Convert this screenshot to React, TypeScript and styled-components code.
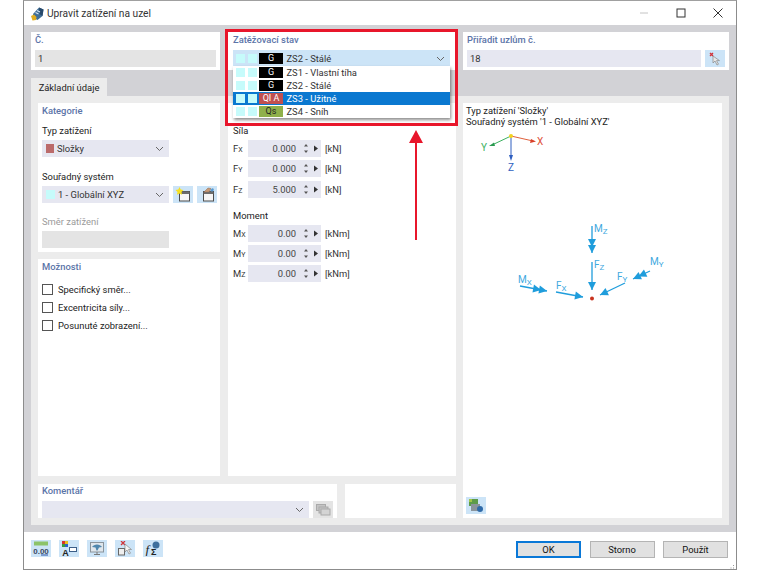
import React from 'react';
import styled, { createGlobalStyle } from 'styled-components';

const Global = createGlobalStyle`
    html, body { margin: 0; padding: 0; background: #fff; }
    body { font-family: Roboto, "Open Sans", sans-serif; font-size: 9.4px; color: #222; }
`;

const Page = styled.div`
    width: 760px;
    height: 570px;
    padding-left: 23px;
    box-sizing: border-box;
    position: relative;
    overflow: hidden;
`;

const Dialog = styled.div`
    width: 714px;
    height: 570px;
    box-sizing: border-box;
    border: 1px solid #8c8c8c;
    border-top-color: #a0a0a0;
    display: flex;
    flex-direction: column;
    background: #fff;
`;

const TitleBar = styled.div`
    height: 24px;
    display: flex;
    align-items: center;
    padding-left: 6px;
    flex: none;
`;

const TitleText = styled.span`
    font-size: 10.2px;
    margin-left: 2px;
    color: #333;
`;

const WinControls = styled.div`
    margin-left: auto;
    display: flex;
    align-items: center;
    gap: 27px;
    padding-right: 13px;
`;

const Body = styled.div`
    flex: 1;
    background: #d2d2d6;
    padding: 7px;
    display: flex;
    flex-direction: column;
`;

const TopRow = styled.div`
    display: grid;
    grid-template-columns: 189px 227px 266px;
    column-gap: 8px;
    height: 38px;
    flex: none;
`;

const Panel = styled.div`
    background: #fff;
    padding: 0 4px;
    box-sizing: border-box;
    position: relative;
    min-width: 0;
`;

const TopPanel = styled(Panel)`
    padding-top: 1px;
`;

const CasePanel = styled(TopPanel)`
    padding-left: 5px;
    padding-right: 5px;
`;

const Caption = styled.div<{ $muted?: boolean }>`
    color: ${(p) => (p.$muted ? '#9a9a9a' : '#5b74a8')};
    font-weight: ${(p) => (p.$muted ? 400 : 500)};
    line-height: 14px;
    height: 14px;
    margin-bottom: 3px;
`;

const Label = styled.div`
    line-height: 14px;
    height: 14px;
    margin-bottom: 2px;
`;

const Field = styled.div<{ $bg?: string; $w?: number }>`
    height: 17px;
    line-height: 17px;
    padding-left: 3px;
    box-sizing: border-box;
    background: ${(p) => p.$bg || '#e6e7f1'};
    ${(p) => (p.$w ? `width: ${p.$w}px;` : '')}
    flex: ${(p) => (p.$w ? 'none' : '1')};
    color: #333;
`;

const FieldRow = styled.div`
    display: flex;
    gap: 4px;
    align-items: flex-start;
`;

const IconBtn = styled.div<{ $grey?: boolean }>`
    width: 20px;
    height: 17px;
    flex: none;
    background: ${(p) => (p.$grey ? '#e4e4e4' : '#cce4f7')};
    display: flex;
    align-items: center;
    justify-content: center;
`;

const Select = styled.div<{ $bg?: string; $w?: number }>`
    height: 17px;
    ${(p) => (p.$w ? `width: ${p.$w}px;` : '')}
    flex: none;
    background: ${(p) => p.$bg || '#e6e7f1'};
    display: flex;
    align-items: center;
    padding: 0 4px;
    box-sizing: border-box;
    gap: 3px;
    color: #333;
`;

const CaseSelect = styled(Select)`
    padding: 0 4px 0 3px;
    gap: 2.5px;
`;

const Chevron = styled.svg`
    margin-left: auto;
    margin-right: 1px;
    width: 9px;
    height: 6px;
    flex: none;
`;

const Swatch = styled.span<{ $c: string; $w?: number }>`
    width: ${(p) => p.$w || 8}px;
    height: 9px;
    background: ${(p) => p.$c};
    flex: none;
    display: inline-block;
`;

const Light = styled.span`
    width: 9px;
    height: 9px;
    background: #c6fbfb;
    flex: none;
`;

const CaseTag = styled.span<{ $bg: string; $fg: string }>`
    width: 24px;
    height: 11px;
    line-height: 11px;
    text-align: center;
    font-size: 9px;
    margin: 0 1px 0 0;
    background: ${(p) => p.$bg};
    color: ${(p) => p.$fg};
    flex: none;
`;

const DropList = styled.div`
    position: absolute;
    left: 5px;
    top: 34px;
    width: 217px;
    background: #fff;
    box-shadow: 1px 2px 3px rgba(0, 0, 0, 0.45);
    z-index: 2;
`;

const DropRow = styled.div<{ $active?: boolean }>`
    height: 13px;
    display: flex;
    align-items: center;
    gap: 2.5px;
    padding: 0 3px;
    background: ${(p) => (p.$active ? '#0a78d0' : 'transparent')};
    color: ${(p) => (p.$active ? '#fff' : '#333')};
`;

const RedFrame = styled.div`
    position: absolute;
    left: 225px;
    top: 29px;
    width: 233px;
    height: 97px;
    box-sizing: border-box;
    border: 3px solid #e8162b;
    z-index: 3;
    pointer-events: none;
`;

const RedArrow = styled.svg`
    position: absolute;
    left: 402px;
    top: 128px;
    z-index: 3;
`;

const Tab = styled.div`
    width: 76px;
    height: 18px;
    line-height: 19px;
    text-align: center;
    background: #ececec;
    margin-top: 8px;
    flex: none;
`;

const TabBody = styled.div`
    flex: 1;
    background: #ececec;
    padding: 7px;
    display: flex;
    gap: 7px;
`;

const LeftArea = styled.div`
    width: 418px;
    flex: none;
    display: flex;
    flex-direction: column;
    gap: 8px;
`;

const Columns = styled.div`
    height: 373px;
    flex: none;
    display: flex;
    gap: 8px;
`;

const SideCol = styled.div`
    width: 182px;
    flex: none;
    display: flex;
    flex-direction: column;
    gap: 7px;
`;

const KategoriePanel = styled(Panel)`
    height: 149px;
    flex: none;
    padding-top: 1px;
`;

const MoznostiPanel = styled(Panel)`
    flex: 1;
    padding-top: 1px;
`;

const Gap = styled.div<{ $h: number }>`
    height: ${(p) => p.$h}px;
`;

const CheckRow = styled.div`
    display: flex;
    align-items: center;
    gap: 5px;
    height: 12px;
    margin-bottom: 6px;
`;

const CheckBox = styled.span`
    width: 11px;
    height: 11px;
    border: 1px solid #555;
    box-sizing: border-box;
    flex: none;
`;

const CenterPanel = styled(Panel)`
    width: 228px;
    flex: none;
    padding: 21px 0 0 5px;
`;

const ValueRow = styled.div`
    display: flex;
    align-items: center;
    height: 17px;
    margin-bottom: 3.3px;
`;

const Sym = styled.span`
    width: 15px;
    color: #333;
    flex: none;
`;

const Sub = styled.span`
    font-size: 7px;
`;

const ValueBox = styled.div`
    width: 73px;
    height: 17px;
    background: #e6e7f1;
    display: flex;
    align-items: center;
    justify-content: flex-end;
    flex: none;
`;

const ValueNum = styled.span`
    color: #444;
    margin-right: 5px;
`;

const Spin = styled.svg`
    width: 20px;
    height: 13px;
    flex: none;
`;

const Unit = styled.span`
    margin-left: 4px;
    color: #333;
`;

const BottomRow = styled.div`
    display: flex;
    gap: 8px;
    flex: 1;
`;

const CommentPanel = styled(Panel)`
    width: 299px;
    flex: none;
`;

const BlankPanel = styled(Panel)`
    flex: 1;
`;

const RightPanel = styled(Panel)`
    width: 259px;
    flex: none;
    padding: 2px 0 4px 3px;
    display: flex;
    flex-direction: column;
`;

const InfoText = styled.div`
    line-height: 11px;
    color: #222;
`;

const Diagram = styled.svg`
    display: block;
    flex: 1;
    margin-left: -3px;
    min-height: 0;
`;

const Footer = styled.div`
    height: 33px;
    flex: none;
    display: flex;
    align-items: flex-start;
    padding: 8px 8px 0 7px;
    position: relative;
`;

const ToolGroup = styled.div`
    display: flex;
    gap: 8px;
`;

const Buttons = styled.div`
    margin-left: auto;
    display: flex;
    gap: 8.5px;
    margin-top: 1px;
`;

const DlgButton = styled.div<{ $primary?: boolean }>`
    width: 65px;
    height: 17px;
    box-sizing: border-box;
    background: #e1e1e1;
    border: ${(p) => (p.$primary ? '2px solid #0a78d7' : '1px solid #b4b4b4')};
    display: flex;
    align-items: center;
    justify-content: center;
    color: #111;
`;

const Grip = styled.svg`
    position: absolute;
    right: 1px;
    bottom: 1px;
`;

const ChevronIcon = () => (
    <Chevron viewBox="0 0 9 6">
        <path d="M1 1l3.500 3.500L8 1" fill="none" stroke="#666" strokeWidth="1" />
    </Chevron>
);

const PickIcon = () => (
    <svg width="14" height="14" viewBox="0 0 14 14">
        <path d="M2 1l3 3M5 1L2 4" stroke="#d0343a" strokeWidth="1.400" />
        <path d="M5 4l0 7 2-2 2 4 1.500-.8-2-3.600h3z" fill="#e8e8e8" stroke="#888" strokeWidth=".7" />
    </svg>
);

const WindowIcon = ({ star }: { star?: boolean }) => (
    <svg width="16" height="15" viewBox="0 0 16 15">
        <rect x="4.500" y="4.500" width="10" height="9.500" fill="#f6f6f6" stroke="#4d4d4d" />
        <rect x="4.500" y="4.500" width="10" height="2.500" fill="#6c6c6c" />
        {star ? (
            <path d="M4.500 0l1.200 2.600 2.800.4-2 2 .5 2.800-2.500-1.300L2 7.800l.5-2.800-2-2 2.800-.4z" fill="#f6e020" />
        ) : (
            <>
                <path d="M5 5l4-4 3 .5-2 3.500z" fill="#c79a78" stroke="#8c6a50" strokeWidth=".5" />
                <path d="M11 3l3-2 1 2-2 2z" fill="#5b9bd0" />
            </>
        )}
    </svg>
);

const TitleIcon = () => (
    <svg width="15" height="15" viewBox="0 0 15 15">
        <path d="M3 8l6-6.500 4.500 2-1 6.500-5 4-4-2z" fill="#3f6d96" />
        <path d="M9 1.500l4.500 2-1 6.500-3-2z" fill="#27486a" />
        <path d="M1 10l3-1.500 2.500 2.500-.5 3-3.500.5z" fill="#e0ac1e" />
        <path d="M7 4.500l3 1.500M5.500 6.500l3 1.500" stroke="#d6e4f0" strokeWidth="1.100" />
    </svg>
);

const NumberIcon = () => (
    <svg width="16" height="15" viewBox="0 0 16 15">
        <rect x="1" y="0.500" width="14" height="4" fill="#8cc36a" />
        <text x="8" y="12.500" textAnchor="middle" fontSize="8" fontWeight="700" fill="#3b4a62" fontFamily="Liberation Sans">
            0.00
        </text>
        <path d="M8 14h7" stroke="#2a52a8" />
    </svg>
);

const DisplayIcon = () => (
    <svg width="16" height="15" viewBox="0 0 16 15">
        <rect x="1" y="0" width="3" height="3" fill="#d8332c" />
        <rect x="4" y="0" width="3" height="3" fill="#e6c01e" />
        <rect x="1" y="3" width="3" height="3" fill="#3a9a3c" />
        <rect x="4" y="3" width="3" height="3" fill="#2c62c8" />
        <text x="4.500" y="14.500" textAnchor="middle" fontSize="9" fontWeight="700" fill="#222" fontFamily="Liberation Sans">
            A
        </text>
        <rect x="8.500" y="6.500" width="7" height="4" fill="#fff" stroke="#3b5e88" />
    </svg>
);

const ScreenIcon = () => (
    <svg width="16" height="15" viewBox="0 0 16 15">
        <rect x="1.500" y="1.500" width="13" height="9.500" fill="#dfe6ec" stroke="#8a949c" />
        <path d="M3 6c2-3.500 8-3.500 10 0l-3 .5-1.500 3H7.500L6.500 6.500z" fill="#4f87ae" />
        <path d="M8 11v2M5 13.500h6" stroke="#777" />
    </svg>
);

const DeleteIcon = () => (
    <svg width="16" height="15" viewBox="0 0 16 15">
        <path d="M4 0l4 4M8 0L4 4" stroke="#d0343a" strokeWidth="1.300" />
        <rect x="1.500" y="7.500" width="6" height="6.500" fill="#efefef" stroke="#666" />
        <path d="M8 3l0 8 2-2 2 4 1.500-.8-2-3.700h3z" fill="#f4f4f4" stroke="#888" strokeWidth=".7" />
    </svg>
);

const FormulaIcon = () => (
    <svg width="16" height="15" viewBox="0 0 16 15">
        <text x="0.500" y="13" fontSize="13" fontStyle="italic" fill="#222" fontFamily="Liberation Serif">
            f
        </text>
        <text x="6" y="14" fontSize="9" fontWeight="700" fill="#222" fontFamily="Liberation Sans">
            Σ
        </text>
        <circle cx="11" cy="4" r="3.500" fill="#3d6f9e" />
    </svg>
);

const CopyIcon = () => (
    <svg width="15" height="12" viewBox="0 0 15 12">
        <rect x="0.500" y="0.500" width="9" height="6" fill="#c4c4c4" stroke="#aaa" />
        <rect x="3" y="3" width="9" height="6" fill="#c4c4c4" stroke="#aaa" />
        <rect x="5" y="5" width="9" height="6" fill="#d4d4d4" stroke="#aaa" />
    </svg>
);

const RenderIcon = () => (
    <svg width="16" height="15" viewBox="0 0 16 15">
        <rect x="1" y="1" width="9" height="7" fill="#5d9b4a" />
        <rect x="1" y="1" width="3" height="3" fill="#a0c848" />
        <rect x="3" y="6" width="9" height="7" fill="#8a949c" />
        <circle cx="12" cy="11" r="3" fill="#2f6aa8" />
    </svg>
);

function Spinner() {
    return (
        <Spin viewBox="0 0 20 13">
            <path d="M3 4.500l2-2.500 2 2.500zM3 8.500l2 2.500 2-2.500z" fill="#555" />
            <path d="M13 3.500l4 3-4 3z" fill="#333" />
        </Spin>
    );
}

function Value({ sym, sub, val, unit }: { sym: string; sub: string; val: string; unit: string }) {
    return (
        <ValueRow>
            <Sym>
                {sym}
                <Sub>{sub}</Sub>
            </Sym>
            <ValueBox>
                <ValueNum>{val}</ValueNum>
                <Spinner />
            </ValueBox>
            <Unit>{unit}</Unit>
        </ValueRow>
    );
}

const cases = [
    { tag: 'G', bg: '#000', fg: '#fff', name: 'ZS1 - Vlastní tíha' },
    { tag: 'G', bg: '#000', fg: '#fff', name: 'ZS2 - Stálé' },
    { tag: 'QI A', bg: '#c05050', fg: '#fff', name: 'ZS3 - Užitné', active: true },
    { tag: 'Qs', bg: '#8fb04a', fg: '#222', name: 'ZS4 - Sníh' },
];

const blue = '#1f9ddc';

function Force({ x1, y1, x2, y2, double }: { x1: number; y1: number; x2: number; y2: number; double?: boolean }) {
    const a = Math.atan2(y2 - y1, x2 - x1);
    const head = (tipX: number, tipY: number) => {
        const bx = tipX - Math.cos(a) * 8;
        const by = tipY - Math.sin(a) * 8;
        const nx = -Math.sin(a) * 4;
        const ny = Math.cos(a) * 4;
        return `${tipX},${tipY} ${bx + nx},${by + ny} ${bx - nx},${by - ny}`;
    };
    return (
        <g>
            <line x1={x1} y1={y1} x2={x2} y2={y2} stroke={blue} strokeWidth="1.300" />
            <polygon points={head(x2, y2)} fill={blue} />
            {double && <polygon points={head(x2 - Math.cos(a) * 6, y2 - Math.sin(a) * 6)} fill={blue} />}
        </g>
    );
}

function ForceLabel({ x, y, a, b }: { x: number; y: number; a: string; b: string }) {
    return (
        <text x={x} y={y} fill="#3fa9e0" fontSize="10" fontFamily="Roboto">
            {a}
            <tspan fontSize="8" dy="1.500">
                {b}
            </tspan>
        </text>
    );
}

// viewBox origin is the page position of the diagram's top-left corner
function LoadDiagram() {
    return (
        <Diagram viewBox="463 127 259 370" width="259" height="370">
            <line x1="511" y1="136" x2="533" y2="141" stroke="#e0603c" strokeWidth="1" />
            <polygon points="536,141.500 530,143 531,139" fill="#d8402a" />
            <line x1="511" y1="136" x2="492" y2="145" stroke="#3cb060" strokeWidth="1" />
            <polygon points="489,146 494,142.500 495,146" fill="#2a9a50" />
            <line x1="511" y1="136" x2="511" y2="157" stroke="#2f5fc0" strokeWidth="1" />
            <polygon points="511,161 509,155 513,155" fill="#2f5fc0" />
            <circle cx="511" cy="136" r="2" fill="#f2d21e" />
            <text x="537" y="145" fontSize="10" fill="#e0503a" fontFamily="Roboto">X</text>
            <text x="481" y="151" fontSize="10" fill="#3cb060" fontFamily="Roboto">Y</text>
            <text x="508" y="171" fontSize="10" fill="#2f5fc0" fontFamily="Roboto">Z</text>

            <Force x1={592} y1={226} x2={592} y2={253} double />
            <Force x1={592} y1={262} x2={592} y2={290} />
            <Force x1={556} y1={292} x2={583} y2={297} />
            <Force x1={625} y1={283} x2={600} y2={295} />
            <Force x1={520} y1={286} x2={547} y2={291} double />
            <Force x1={650} y1={271} x2={633} y2={279} double />
            <circle cx="592" cy="298.500" r="2" fill="#c8321e" />
            <ForceLabel x={594} y={232} a="M" b="Z" />
            <ForceLabel x={594} y={268} a="F" b="Z" />
            <ForceLabel x={556} y={289} a="F" b="X" />
            <ForceLabel x={617} y={280} a="F" b="Y" />
            <ForceLabel x={518} y={283} a="M" b="X" />
            <ForceLabel x={650} y={265} a="M" b="Y" />
        </Diagram>
    );
}

export default function App() {
    return (
        <Page>
            <Global />
            <Dialog>
                <TitleBar>
                    <TitleIcon />
                    <TitleText>Upravit zatížení na uzel</TitleText>
                    <WinControls>
                        <svg width="10" height="10" viewBox="0 0 10 10">
                            <path d="M1 5h8" stroke="#c4c4c4" />
                        </svg>
                        <svg width="10" height="10" viewBox="0 0 10 10">
                            <rect x="1" y="1" width="8" height="8" fill="none" stroke="#333" />
                        </svg>
                        <svg width="10" height="10" viewBox="0 0 10 10">
                            <path d="M.5.5l9 9M9.500.5l-9 9" stroke="#333" />
                        </svg>
                    </WinControls>
                </TitleBar>
                <Body>
                    <TopRow>
                        <TopPanel>
                            <Caption>Č.</Caption>
                            <Field $bg="#e4e4e4">1</Field>
                        </TopPanel>
                        <CasePanel>
                            <Caption>Zatěžovací stav</Caption>
                            <CaseSelect $bg="#cce4f7">
                                <Light />
                                <Light />
                                <CaseTag $bg="#000" $fg="#fff">G</CaseTag>
                                <span>ZS2 - Stálé</span>
                                <ChevronIcon />
                            </CaseSelect>
                            <DropList>
                                {cases.map((c) => (
                                    <DropRow key={c.name} $active={c.active}>
                                        <Light />
                                        <Light />
                                        <CaseTag $bg={c.bg} $fg={c.fg}>{c.tag}</CaseTag>
                                        <span>{c.name}</span>
                                    </DropRow>
                                ))}
                            </DropList>
                        </CasePanel>
                        <TopPanel>
                            <Caption>Přiřadit uzlům č.</Caption>
                            <FieldRow>
                                <Field>18</Field>
                                <IconBtn>
                                    <PickIcon />
                                </IconBtn>
                            </FieldRow>
                        </TopPanel>
                    </TopRow>
                    <Tab>Základní údaje</Tab>
                    <TabBody>
                        <LeftArea>
                            <Columns>
                                <SideCol>
                                    <KategoriePanel>
                                        <Caption>Kategorie</Caption>
                                        <Gap $h={3} />
                                        <Label>Typ zatížení</Label>
                                        <Select $w={127}>
                                            <Swatch $c="#bb6b6b" />
                                            <span>Složky</span>
                                            <ChevronIcon />
                                        </Select>
                                        <Gap $h={13} />
                                        <Label>Souřadný systém</Label>
                                        <FieldRow>
                                            <Select $w={127}>
                                                <Light />
                                                <span>1 - Globální XYZ</span>
                                                <ChevronIcon />
                                            </Select>
                                            <IconBtn>
                                                <WindowIcon star />
                                            </IconBtn>
                                            <IconBtn>
                                                <WindowIcon />
                                            </IconBtn>
                                        </FieldRow>
                                        <Gap $h={12} />
                                        <Label>
                                            <Caption as="span" $muted>Směr zatížení</Caption>
                                        </Label>
                                        <Field $bg="#e4e4e4" $w={127} />
                                    </KategoriePanel>
                                    <MoznostiPanel>
                                        <Caption>Možnosti</Caption>
                                        <Gap $h={6} />
                                        <CheckRow>
                                            <CheckBox />
                                            Specifický směr...
                                        </CheckRow>
                                        <CheckRow>
                                            <CheckBox />
                                            Excentricita síly...
                                        </CheckRow>
                                        <CheckRow>
                                            <CheckBox />
                                            Posunuté zobrazení...
                                        </CheckRow>
                                    </MoznostiPanel>
                                </SideCol>
                                <CenterPanel>
                                    <Label>Síla</Label>
                                    <Value sym="F" sub="X" val="0.000" unit="[kN]" />
                                    <Value sym="F" sub="Y" val="0.000" unit="[kN]" />
                                    <Value sym="F" sub="Z" val="5.000" unit="[kN]" />
                                    <Gap $h={8} />
                                    <Label>Moment</Label>
                                    <Value sym="M" sub="X" val="0.00" unit="[kNm]" />
                                    <Value sym="M" sub="Y" val="0.00" unit="[kNm]" />
                                    <Value sym="M" sub="Z" val="0.00" unit="[kNm]" />
                                </CenterPanel>
                            </Columns>
                            <BottomRow>
                                <CommentPanel>
                                    <Caption>Komentář</Caption>
                                    <FieldRow>
                                        <Select $w={267}>
                                            <ChevronIcon />
                                        </Select>
                                        <IconBtn $grey>
                                            <CopyIcon />
                                        </IconBtn>
                                    </FieldRow>
                                </CommentPanel>
                                <BlankPanel />
                            </BottomRow>
                        </LeftArea>
                        <RightPanel>
                            <InfoText>Typ zatížení 'Složky'</InfoText>
                            <InfoText>Souřadný systém '1 - Globální XYZ'</InfoText>
                            <LoadDiagram />
                            <IconBtn>
                                <RenderIcon />
                            </IconBtn>
                        </RightPanel>
                    </TabBody>
                </Body>
                <Footer>
                    <ToolGroup>
                        <IconBtn><NumberIcon /></IconBtn>
                        <IconBtn><DisplayIcon /></IconBtn>
                        <IconBtn><ScreenIcon /></IconBtn>
                        <IconBtn><DeleteIcon /></IconBtn>
                        <IconBtn><FormulaIcon /></IconBtn>
                    </ToolGroup>
                    <Buttons>
                        <DlgButton $primary>OK</DlgButton>
                        <DlgButton>Storno</DlgButton>
                        <DlgButton>Použít</DlgButton>
                    </Buttons>
                    <Grip width="8" height="8" viewBox="0 0 8 8">
                        <path d="M6 1h1v1H6zM3.500 3.500h1v1h-1zM6 3.500h1v1H6zM1 6h1v1H1zM3.500 6h1v1h-1zM6 6h1v1H6z" fill="#9a9a9a" />
                    </Grip>
                </Footer>
            </Dialog>
            <RedFrame />
            <RedArrow width="28" height="114" viewBox="0 0 28 114">
                <path d="M14 14V112" stroke="#e8162b" strokeWidth="2" />
                <path d="M14 2L21 15H7z" fill="#e8162b" />
            </RedArrow>
        </Page>
    );
}
